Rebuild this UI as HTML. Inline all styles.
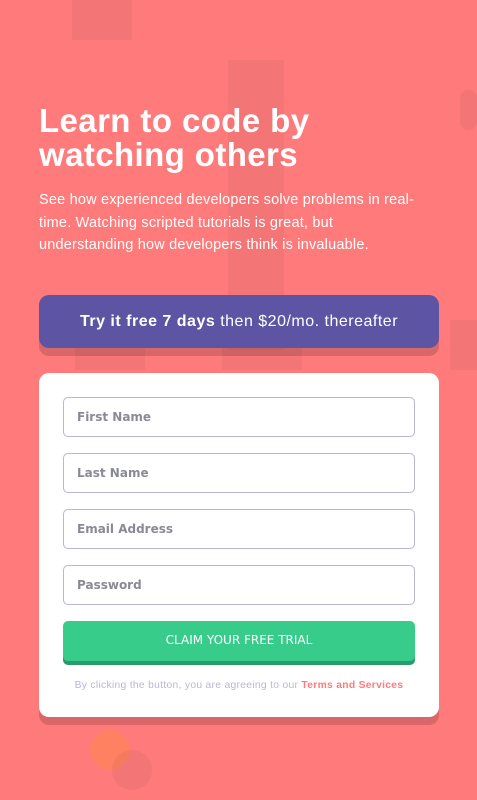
<!DOCTYPE html>
<html><head><meta charset="utf-8"><style>
*{margin:0;padding:0;box-sizing:border-box}
body{width:477px;height:800px;background:#ff7a7a;font-family:"Liberation Sans",sans-serif;position:relative;overflow:hidden;color:#fff}
.bg div{position:absolute;background:rgba(120,60,80,0.08)}
h1{position:absolute;left:39px;top:104px;font-size:33px;line-height:34px;font-weight:700;letter-spacing:0.4px;white-space:nowrap}
p.sub{position:absolute;left:39px;top:189px;width:420px;font-size:14.5px;line-height:22.5px;letter-spacing:0.2px;white-space:nowrap}
.banner{position:absolute;left:39px;top:295px;width:400px;height:53px;background:#5e54a4;border-radius:10px;box-shadow:0 8px 0 rgba(0,0,0,0.15);text-align:center;line-height:53px;font-size:16px;letter-spacing:0.5px}
.card{position:absolute;left:39px;top:373px;width:400px;height:344px;background:#fff;border-radius:10px;box-shadow:0 8px 0 rgba(0,0,0,0.15)}
.in{position:absolute;left:24px;width:352px;height:40px;border:1px solid #b9b6d3;border-radius:5px;color:#8a8a96;font-weight:700;line-height:39px;padding-left:13px;font-family:"DejaVu Sans",sans-serif;font-size:12px}
.btn{position:absolute;left:24px;top:248px;width:352px;height:40px;background:#38cc8b;border-radius:5px;box-shadow:0 4px 0 #2a9c6b;text-align:center;line-height:38px;font-size:12px;font-family:"DejaVu Sans",sans-serif}
.tos{position:absolute;left:0;width:400px;top:307px;text-align:center;font-size:10.3px;letter-spacing:0.3px;color:#bab7d4;white-space:nowrap}
.tos b{color:#ff7a7a}
</style></head><body>
<div class="bg">
<div style="left:72px;top:0;width:60px;height:40px"></div>
<div style="left:228px;top:60px;width:56px;height:290px"></div>
<div style="left:222px;top:345px;width:80px;height:25px"></div>
<div style="left:450px;top:320px;width:27px;height:50px"></div>
<div style="left:75px;top:345px;width:70px;height:25px"></div>
<div style="left:460px;top:90px;width:17px;height:40px;border-radius:8px"></div>
<div style="left:90px;top:730px;width:40px;height:40px;border-radius:50%;background:rgba(255,140,60,0.4)"></div>
<div style="left:112px;top:750px;width:40px;height:40px;border-radius:50%"></div>
</div>
<h1>Learn to code by<br>watching others</h1>
<p class="sub">See how experienced developers solve problems in real-<br>time. Watching scripted tutorials is great, but<br>understanding how developers think is invaluable.</p>
<div class="banner"><b>Try it free 7 days</b> then $20/mo. thereafter</div>
<div class="card">
<div class="in" style="top:24px">First Name</div>
<div class="in" style="top:80px">Last Name</div>
<div class="in" style="top:136px">Email Address</div>
<div class="in" style="top:192px">Password</div>
<div class="btn">CLAIM YOUR FREE TRIAL</div>
<div class="tos">By clicking the button, you are agreeing to our <b>Terms and Services</b></div>
</div>
</body></html>
